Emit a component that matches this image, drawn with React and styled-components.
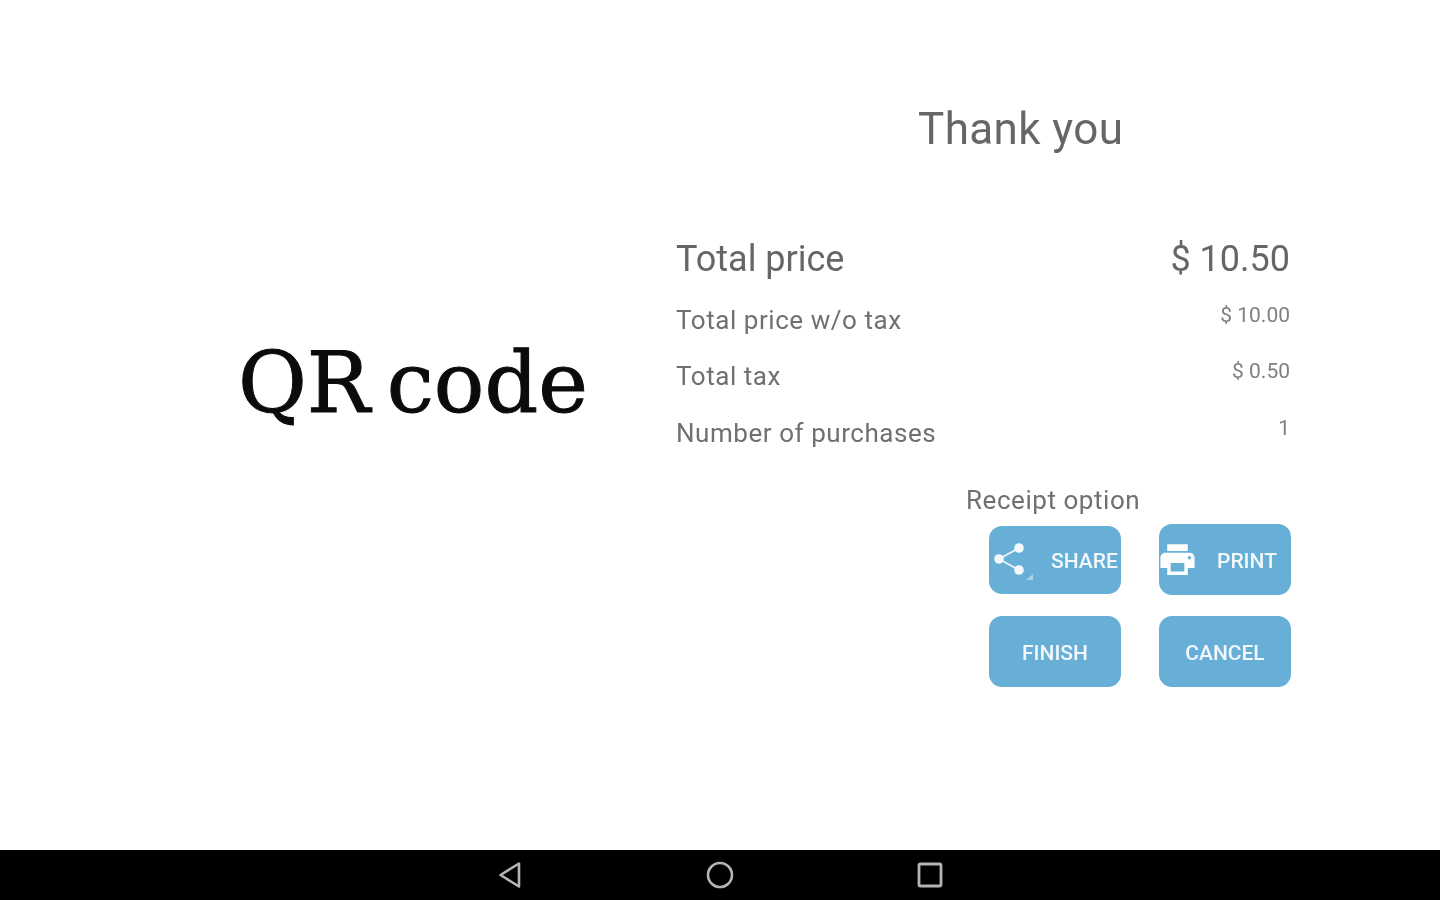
import React from "react"
import styled, { createGlobalStyle } from "styled-components"
import { MdPrint } from "react-icons/md"

const GlobalStyle = createGlobalStyle`
  html, body {
    margin: 0;
    padding: 0;
    background: #fff;
  }
  body {
    font-family: Roboto, "Liberation Sans", sans-serif;
  }
`

const rows = [
  { label: "Total price w/o tax", value: "$ 10.00" },
  { label: "Total tax", value: "$ 0.50" },
  { label: "Number of purchases", value: "1" },
]

function ShareGlyph() {
  return (
    <ShareSvg viewBox="0 0 42 42">
      <g fill="#f2f8fb" stroke="#f2f8fb" strokeWidth="1.600">
        <path d="M25 9 L5 20 L25 31" fill="none" />
        <circle cx="25" cy="9" r="4" />
        <circle cx="5" cy="20" r="4" />
        <circle cx="25" cy="31" r="4" />
      </g>
      <path d="M39 35 L39 41 L32 41 Z" fill="#a9d2e9" />
    </ShareSvg>
  )
}

export default function App() {
  return (
    <Screen>
      <GlobalStyle />
      <Content>
        <QrPane>QR code</QrPane>
        <Summary>
          <Title>Thank you</Title>
          <TotalRow>
            <span>Total price</span>
            <span>$ 10.50</span>
          </TotalRow>
          {rows.map((row) => (
            <DetailRow key={row.label}>
              <span>{row.label}</span>
              <DetailValue>{row.value}</DetailValue>
            </DetailRow>
          ))}
          <ReceiptLabel>Receipt option</ReceiptLabel>
          <Buttons>
            <ActionButton $short>
              <ShareGlyph />
              <IconLabel $gap={15}>SHARE</IconLabel>
            </ActionButton>
            <ActionButton>
              <PrintIcon />
              <IconLabel $gap={19}>PRINT</IconLabel>
            </ActionButton>
            <ActionButton $center>FINISH</ActionButton>
            <ActionButton $center>CANCEL</ActionButton>
          </Buttons>
        </Summary>
      </Content>
      <NavBar>
        <svg width="30" height="30" viewBox="0 0 30 30" fill="none" stroke="#b4b4b4" strokeWidth="2.600" strokeLinejoin="round">
          <path d="M24 3.500 L5.500 15 L24 26.500 Z" />
        </svg>
        <svg width="30" height="30" viewBox="0 0 30 30" fill="none" stroke="#b4b4b4" strokeWidth="2.600">
          <circle cx="15" cy="15" r="12" />
        </svg>
        <svg width="30" height="30" viewBox="0 0 30 30" fill="none" stroke="#b4b4b4" strokeWidth="2.800" strokeLinejoin="round">
          <rect x="4" y="4" width="22" height="22" rx="1.500" />
        </svg>
      </NavBar>
    </Screen>
  )
}

const Screen = styled.div`
  width: 1440px;
  height: 900px;
  display: flex;
  flex-direction: column;
  overflow: hidden;
  filter: blur(0.6px);
`

const Content = styled.main`
  height: 850px;
  display: flex;
`

const QrPane = styled.div`
  width: 676px;
  box-sizing: border-box;
  padding: 327px 0 0 238px;
  font-family: "DejaVu Serif", serif;
  font-size: 84px;
  line-height: 112px;
  word-spacing: -10px;
  color: #0b0b0b;
  -webkit-text-stroke: 1px #0b0b0b;
  white-space: nowrap;
`

const Summary = styled.section`
  width: 615px;
  display: flex;
  flex-direction: column;
  padding-top: 100px;
  color: #666;
`

const Title = styled.h1`
  margin: 0 0 77px;
  padding-left: 242px;
  font-size: 44px;
  font-weight: 400;
  line-height: 58px;
  letter-spacing: 0.4px;
  white-space: nowrap;
`

const TotalRow = styled.div`
  display: flex;
  justify-content: space-between;
  padding-right: 1px;
  font-size: 36px;
  line-height: 48px;
  margin-bottom: 21px;
`

const DetailRow = styled.div`
  display: flex;
  justify-content: space-between;
  padding-right: 1px;
  font-size: 26px;
  line-height: 32px;
  letter-spacing: 0.55px;
  margin-bottom: 24.300px;
  color: #707070;
`

const DetailValue = styled.span`
  font-size: 21px;
  line-height: 22px;
  letter-spacing: 0;
  color: #808080;
`

const ReceiptLabel = styled.div`
  margin: 10px 0 8px 290px;
  font-size: 26px;
  line-height: 34px;
  letter-spacing: 0.55px;
  color: #707070;
`

const Buttons = styled.div`
  display: grid;
  grid-template-columns: 132px 132px;
  column-gap: 38px;
  row-gap: 22px;
  padding-left: 313px;
`

const ActionButton = styled.button`
  height: ${(p) => (p.$short ? "68px" : "71px")};
  margin-top: ${(p) => (p.$short ? "1px" : "-1px")};
  padding: 3px 0 0;
  border: none;
  border-radius: 13px;
  background: #68afd8;
  color: #f2f8fb;
  font-family: Roboto, sans-serif;
  font-size: 21px;
  font-weight: 500;
  display: flex;
  align-items: center;
  justify-content: ${(p) => (p.$center ? "center" : "flex-start")};
  white-space: nowrap;
  overflow: visible;
`

const IconLabel = styled.span`
  margin-left: ${(p) => p.$gap}px;
`

const ShareSvg = styled.svg`
  width: 42px;
  height: 42px;
  margin: 0 0 3px 5px;
  flex: none;
`

const PrintIcon = styled(MdPrint)`
  width: 41px;
  height: 41px;
  margin: 0 0 2px -2px;
  color: #fff;
  flex: none;
`

const NavBar = styled.nav`
  height: 50px;
  background: #000;
  display: flex;
  align-items: center;
  justify-content: center;
  gap: 180px;
`
